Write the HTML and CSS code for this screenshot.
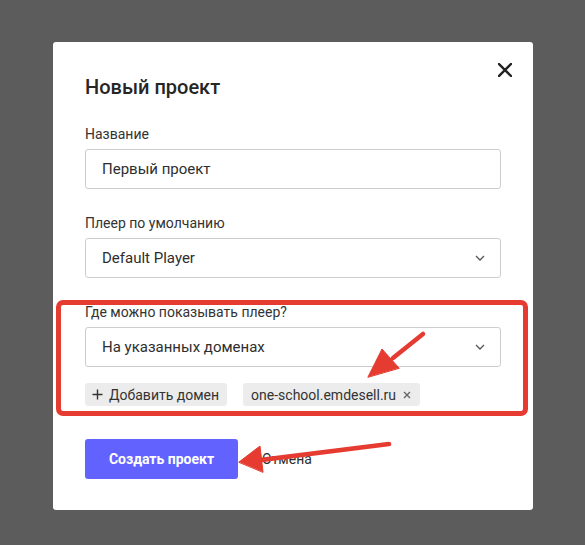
FILE: index.html
```html
<!DOCTYPE html>
<html lang="ru">
<head>
<meta charset="utf-8">
<link rel="stylesheet" href="styles.css">
</head>
<body>
<div class="modal">
  <button class="close" aria-label="Закрыть">
    <svg width="14" height="14" viewBox="0 0 14 14"><path d="M1 1L13 13M13 1L1 13" stroke="#222" stroke-width="2.4" stroke-linecap="square"/></svg>
  </button>
  <h1 class="title">Новый проект</h1>

  <label class="label first">Название</label>
  <div class="field"><span class="value">Первый проект</span></div>

  <label class="label">Плеер по умолчанию</label>
  <div class="field select"><span class="value">Default Player</span>
    <svg class="chev" width="10" height="6" viewBox="0 0 10 6"><path d="M1 1l4 4 4-4" fill="none" stroke="#555" stroke-width="1.3"/></svg>
  </div>

  <label class="label">Где можно показывать плеер?</label>
  <div class="field select"><span class="value">На указанных доменах</span>
    <svg class="chev" width="10" height="6" viewBox="0 0 10 6"><path d="M1 1l4 4 4-4" fill="none" stroke="#555" stroke-width="1.3"/></svg>
  </div>

  <div class="chips">
    <span class="chip add"><svg width="11" height="11" viewBox="0 0 11 11"><path d="M5.5 0.5v10M0.5 5.5h10" stroke="#333" stroke-width="1.4"/></svg>Добавить домен</span>
    <span class="chip domain">one-school.emdesell.ru<svg class="x" width="8" height="8" viewBox="0 0 8 8"><path d="M1 1l6 6M7 1L1 7" stroke="#666" stroke-width="1.4"/></svg></span>
  </div>

  <div class="actions">
    <button class="primary">Создать проект</button>
    <button class="cancel">Отмена</button>
  </div>

  <div class="highlight"></div>
  <svg class="arrows" width="480" height="468" viewBox="0 0 480 468">
    <g fill="#e53b30" stroke="#e53b30" stroke-linecap="round" stroke-linejoin="round">
      <path d="M370 292L340 316" stroke-width="4.5" fill="none"/>
      <path d="M315 335L329 307L346 326Z" stroke-width="1"/>
      <path d="M336 402L200 419" stroke-width="4.5" fill="none"/>
      <path d="M186 420L207 404L210 430Z" stroke-width="1"/>
    </g>
  </svg>
</div>
</body>
</html>
```

FILE: styles.css
```css
* { box-sizing: border-box; }
html, body { margin: 0; }
body {
  width: 585px;
  height: 545px;
  background: #5c5c5c;
  padding: 42px 0 0 53px;
  font-family: Roboto, "Liberation Sans", sans-serif;
  color: #2e2e2e;
  overflow: hidden;
}
.modal {
  position: relative;
  width: 480px;
  height: 468px;
  background: #fff;
  border-radius: 3px;
  padding: 30px 32px 31px 32px;
  display: flex;
  flex-direction: column;
}
.close {
  position: absolute;
  top: 21px;
  right: 21px;
  width: 14px;
  height: 14px;
  padding: 0;
  border: 0;
  background: none;
  display: flex;
}
.title {
  margin: 0;
  font-size: 20px;
  font-weight: 500;
  line-height: 30px;
  color: #262626;
}
.label {
  display: block;
  margin-top: 24px;
  font-size: 14px;
  line-height: 20px;
  color: #333;
}
.label.first { margin-top: 22px; }
.field {
  margin-top: 5px;
  height: 40px;
  border: 1px solid #cdcdcd;
  border-radius: 3px;
  padding: 0 15px 0 16px;
  display: flex;
  align-items: center;
  justify-content: space-between;
}
.value {
  font-size: 15px;
  color: #2e2e2e;
}
.chips {
  margin-top: 16px;
  display: flex;
  gap: 16px;
}
.chip {
  height: 23px;
  background: #ececec;
  border-radius: 3px;
  padding: 0 8px 0 7px;
  display: flex;
  align-items: center;
  gap: 6px;
  font-size: 14px;
  color: #333;
}
.chip.domain { padding: 0 9px 0 8px; gap: 7px; }
.actions {
  margin-top: 33px;
  display: flex;
  align-items: center;
  gap: 0;
}
.primary {
  height: 40px;
  width: 153px;
  border: 0;
  border-radius: 3px;
  background: #6263fe;
  color: #fff;
  font-family: inherit;
  font-size: 14px;
  font-weight: 700;
}
.cancel {
  border: 0;
  background: none;
  font-family: inherit;
  font-size: 14px;
  color: #2e2e2e;
  padding: 0 0 0 24px;
}
.highlight {
  position: absolute;
  left: 3px;
  top: 258px;
  width: 472px;
  height: 116px;
  border: 5px solid #e53b30;
  border-radius: 7px;
  pointer-events: none;
}
.arrows {
  position: absolute;
  left: 0;
  top: 0;
  pointer-events: none;
}
```
